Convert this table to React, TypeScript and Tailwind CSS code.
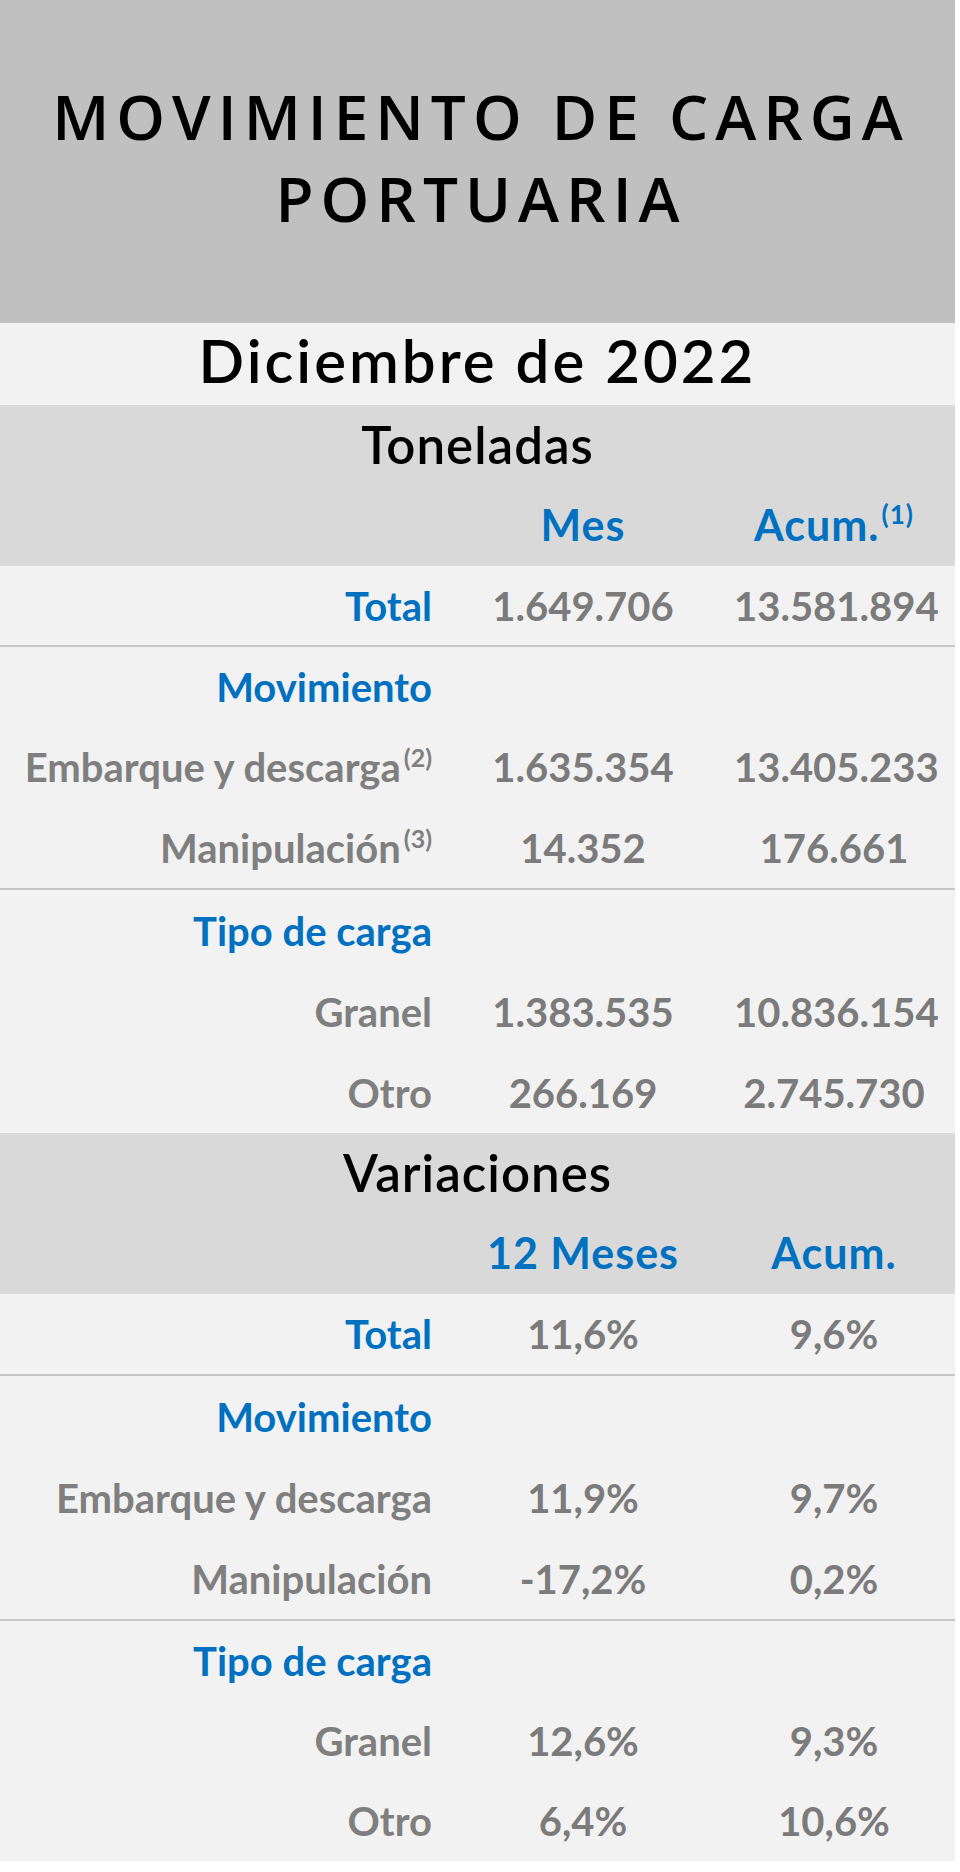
type Row = {
  label: string;
  sup?: string;
  a?: string;
  b?: string;
  head?: boolean;
  h?: string;
};

function DataRow({ label, sup, a, b, head, h }: Row) {
  return (
    <div className={`flex items-center ${h ?? "h-[80px]"}`}>
      <div
        className={`w-[432px] text-right text-[40px] font-bold ${
          head ? "text-[#0070c0]" : "text-[#7f7f7f]"
        }`}
      >
        {label}
        {sup && <span className="relative -top-[15px] ml-[3px] text-[25px]">{sup}</span>}
      </div>
      <div className="w-[302px] text-center text-[40px] font-bold text-[#7b7b7b]">{a}</div>
      <div className="w-[200px] text-center text-[40px] font-bold text-[#7b7b7b]">{b}</div>
    </div>
  );
}

function Line() {
  return <div className="h-[2px] bg-[#c6c6c6]" />;
}

function SectionHead({ title, c1, c2, sup }: { title: string; c1: string; c2: string; sup?: string }) {
  return (
    <div className="bg-[#d9d9d9]">
      <div className="flex h-[80px] items-center justify-center text-[51px] font-semibold tracking-[1px] text-black">
        {title}
      </div>
      <div className="flex h-[81px] items-center text-[43px] font-bold tracking-[1px] text-[#0070c0]">
        <div className="w-[432px]" />
        <div className="w-[302px] text-center">{c1}</div>
        <div className="w-[200px] text-center">
          {c2}
          {sup && <span className="relative -top-[17px] ml-[2px] text-[26px]">{sup}</span>}
        </div>
      </div>
    </div>
  );
}

export default function App() {
  return (
    <div className="min-h-[1872px] bg-white font-['Lato',sans-serif]">
      <div className="w-[955px] bg-[#f2f2f2]">
        <div className="flex h-[323px] flex-col items-center justify-center bg-[#c0c0c0] pb-[10px] pl-[7px] font-['Open_Sans',sans-serif] text-[62px] font-semibold leading-[82px] tracking-[7px] text-black">
          <div>MOVIMIENTO DE CARGA</div>
          <div>PORTUARIA</div>
        </div>
        <div className="flex h-[82px] items-center justify-center pb-[8px] text-[60px] font-semibold tracking-[3px] text-black">
          Diciembre de 2022
        </div>

        <SectionHead title="Toneladas" c1="Mes" c2="Acum." sup="(1)" />
        <DataRow label="Total" head a="1.649.706" b="13.581.894" h="h-[79px]" />
        <Line />
        <DataRow label="Movimiento" head />
        <DataRow label="Embarque y descarga" sup="(2)" a="1.635.354" b="13.405.233" />
        <DataRow label="Manipulación" sup="(3)" a="14.352" b="176.661" h="h-[81px]" />
        <Line />
        <DataRow label="Tipo de carga" head h="h-[81px]" />
        <DataRow label="Granel" a="1.383.535" b="10.836.154" h="h-[81px]" />
        <DataRow label="Otro" a="266.169" b="2.745.730" h="h-[81px]" />

        <SectionHead title="Variaciones" c1="12 Meses" c2="Acum." />
        <DataRow label="Total" head a="11,6%" b="9,6%" />
        <Line />
        <DataRow label="Movimiento" head h="h-[81px]" />
        <DataRow label="Embarque y descarga" a="11,9%" b="9,7%" h="h-[81px]" />
        <DataRow label="Manipulación" a="-17,2%" b="0,2%" h="h-[81px]" />
        <Line />
        <DataRow label="Tipo de carga" head />
        <DataRow label="Granel" a="12,6%" b="9,3%" />
        <DataRow label="Otro" a="6,4%" b="10,6%" />
      </div>
    </div>
  );
}
